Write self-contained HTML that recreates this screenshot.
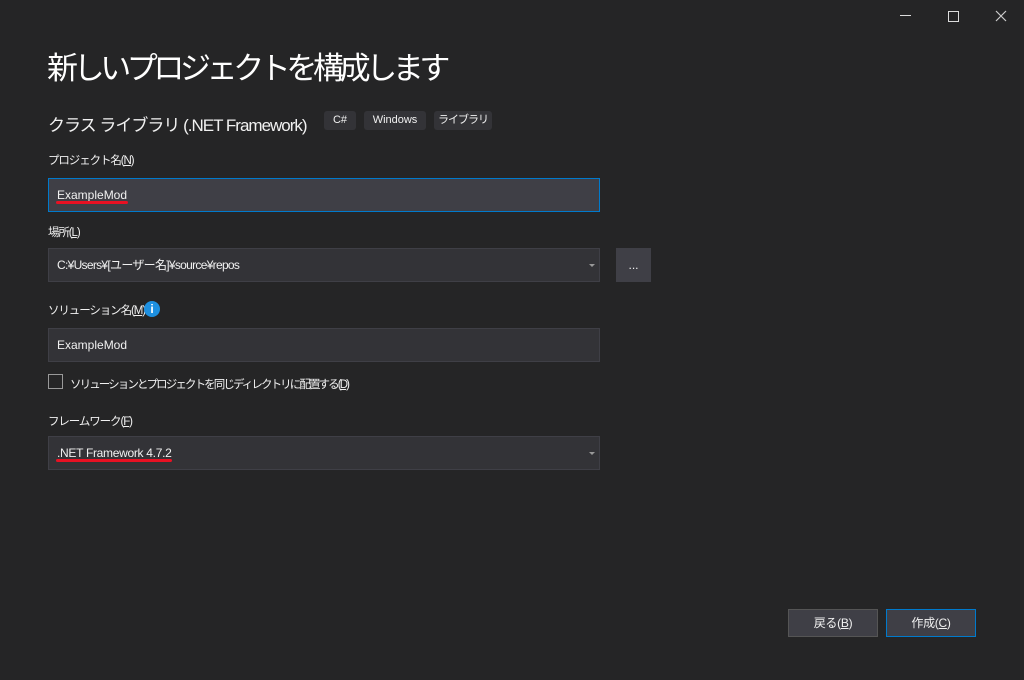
<!DOCTYPE html><html><head><meta charset="utf-8"><style>
body{margin:0;width:1024px;height:680px;background:#252526;color:#f1f1f1;font-family:"Liberation Sans","Noto Sans CJK JP",sans-serif;position:relative;overflow:hidden}
.a{position:absolute;white-space:nowrap}
.lbl{font-size:11.5px;color:#f1f1f1;letter-spacing:-1.1px}
.box{position:absolute;background:#333337;border:1px solid #3f3f46;box-sizing:border-box;font-size:12px;padding-left:8px;line-height:32px;white-space:nowrap}
.tag{position:absolute;top:111px;height:19px;background:#333337;border-radius:3px;font-size:11px;line-height:19px;text-align:center}
.ul{position:absolute;height:3px;background:#e81123;border-radius:2px}
.arr{position:absolute;right:4px;top:15px;border-left:3px solid transparent;border-right:3px solid transparent;border-top:3px solid #999}
.btn{position:absolute;top:609px;width:90px;height:28px;box-sizing:border-box;background:#3f3f46;border:1px solid #555;font-size:12px;text-align:center;line-height:26px;letter-spacing:-0.3px}
</style></head><body>
<div class="a" style="left:900px;top:15px;width:11px;height:1px;background:#ddd"></div>
<div class="a" style="left:948px;top:11px;width:9px;height:9px;border:1px solid #ddd"></div>
<svg class="a" style="left:995px;top:10px" width="12" height="12"><path d="M1 1L11 11M11 1L1 11" stroke="#ccc" stroke-width="1.2"/></svg>
<div class="a" style="left:47px;top:43px;font-size:31px;color:#fff;letter-spacing:-4.4px">新しいプロジェクトを構成します</div>
<div class="a" style="left:48px;top:111px;font-size:17px;letter-spacing:-1px">クラス ライブラリ (.NET Framework)</div>
<div class="tag" style="left:324px;width:32px">C#</div>
<div class="tag" style="left:364px;width:62px">Windows</div>
<div class="tag" style="left:434px;width:58px;letter-spacing:-1px">ライブラリ</div>
<div class="a lbl" style="left:48px;top:152px">プロジェクト名(<u>N</u>)</div>
<div class="box" style="left:48px;top:178px;width:552px;height:34px;border-color:#007acc;background:#3f3f46">ExampleMod</div>
<div class="ul" style="left:56px;top:201px;width:72px"></div>
<div class="a lbl" style="left:48px;top:224px">場所(<u>L</u>)</div>
<div class="box" style="left:48px;top:248px;width:552px;height:34px;letter-spacing:-0.7px">C:¥Users¥[ユーザー名]¥source¥repos<div class="arr"></div></div>
<div class="box" style="left:616px;top:248px;width:35px;height:34px;padding:0;text-align:center;background:#3f3f46">...</div>
<div class="a lbl" style="left:48px;top:302px">ソリューション名(<u>M</u>)</div>
<div class="a" style="left:144px;top:301px;width:16px;height:16px;border-radius:50%;background:#1e90e0;color:#fff;font-size:12px;font-weight:bold;text-align:center;line-height:16px">i</div>
<div class="box" style="left:48px;top:328px;width:552px;height:34px">ExampleMod</div>
<div class="a" style="left:48px;top:374px;width:13px;height:13px;border:1px solid #999"></div>
<div class="a lbl" style="left:70px;top:376px;letter-spacing:-1.9px">ソリューションとプロジェクトを同じディレクトリに配置する(<u>D</u>)</div>
<div class="a lbl" style="left:48px;top:413px">フレームワーク(<u>F</u>)</div>
<div class="box" style="left:48px;top:436px;width:552px;height:34px;letter-spacing:-0.3px">.NET Framework 4.7.2<div class="arr"></div></div>
<div class="ul" style="left:56px;top:459px;width:116px"></div>
<div class="btn" style="left:788px">戻る(<u>B</u>)</div>
<div class="btn" style="left:886px;border-color:#007acc">作成(<u>C</u>)</div>
</body></html>
